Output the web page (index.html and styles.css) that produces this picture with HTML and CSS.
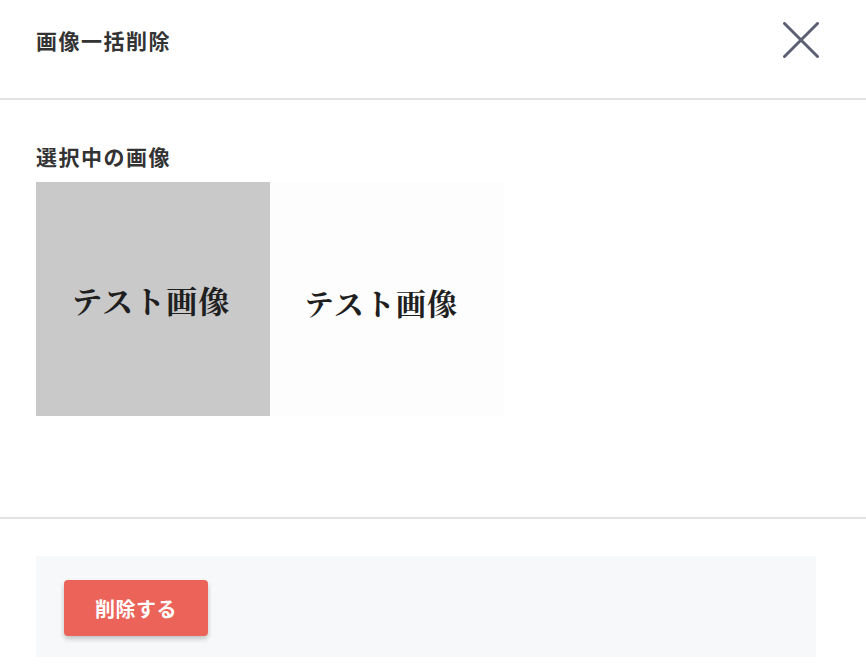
FILE: index.html
```html
<!DOCTYPE html>
<html lang="ja">
<head>
    <meta charset="UTF-8">
    <meta name="viewport" content="width=device-width, initial-scale=1.0">
    <title>画像一括削除</title>
    <link rel="stylesheet" href="styles.css">
</head>
<body>
    <div class="modal">
        <div class="modal-header">
            <h2 class="modal-title">画像一括削除</h2>
            <button class="close-button" aria-label="閉じる">
                <svg width="36" height="36" viewBox="0 0 36 36">
                    <path d="M1.5 1.5 L34.5 34.5 M34.5 1.5 L1.5 34.5" stroke="#5b5f72" stroke-width="3" stroke-linecap="round" fill="none"/>
                </svg>
            </button>
        </div>
        <div class="modal-body">
            <div class="section-label">選択中の画像</div>
            <div class="image-list">
                <div class="thumb thumb-gray"><span>テスト画像</span></div>
                <div class="thumb thumb-white"><span>テスト画像</span></div>
            </div>
        </div>
        <div class="modal-footer">
            <div class="footer-box">
                <button class="delete-button">削除する</button>
            </div>
        </div>
    </div>
</body>
</html>
```

FILE: styles.css
```css
body {
    font-family: "Noto Sans CJK JP", "Noto Sans", sans-serif;
    margin: 0;
    padding: 0;
    background-color: #fff;
    color: #333;
}

.modal {
    width: 866px;
}

.modal-header {
    height: 100px;
    box-sizing: border-box;
    padding: 22px 47px 0 36px;
    display: flex;
    justify-content: space-between;
    align-items: flex-start;
    border-bottom: 2px solid #e3e3e3;
}

.modal-title {
    margin: 0;
    font-size: 21px;
    font-weight: 700;
    line-height: 36px;
    letter-spacing: 1.5px;
}

.close-button {
    width: 36px;
    height: 36px;
    padding: 0;
    border: none;
    background: none;
    cursor: pointer;
}

.close-button svg {
    display: block;
}

.modal-body {
    height: 419px;
    box-sizing: border-box;
    padding: 40px 36px 0;
    border-bottom: 2px solid #e3e3e3;
}

.section-label {
    font-size: 21px;
    font-weight: 700;
    line-height: 32px;
    letter-spacing: 1.5px;
    margin-bottom: 10px;
}

.image-list {
    display: flex;
}

.thumb {
    width: 234px;
    height: 234px;
    display: flex;
    align-items: center;
    justify-content: center;
}

.thumb span {
    font-family: "Noto Serif CJK JP", "Noto Sans CJK JP", serif;
    font-weight: 700;
    font-size: 31px;
    color: #1f1f1f;
    letter-spacing: 1px;
}

.thumb-gray {
    background-color: #c9c9c9;
}

.thumb-gray span {
    margin-left: -4px;
}

.thumb-white {
    background-color: #fdfdfd;
}

.thumb-white span {
    margin-left: -12px;
    margin-top: 6px;
    font-size: 30px;
}

.modal-footer {
    padding: 37px 50px 0 36px;
}

.footer-box {
    background-color: #f7f8fa;
    padding: 24px 28px 21px;
}

.delete-button {
    width: 144px;
    height: 56px;
    background-color: #ec6459;
    color: #fff;
    border: none;
    border-radius: 4px;
    font-family: "Noto Sans CJK JP", sans-serif;
    font-size: 20px;
    font-weight: 700;
    letter-spacing: 0.5px;
    box-shadow: 0 3px 5px rgba(0, 0, 0, 0.22);
    cursor: pointer;
}
```
